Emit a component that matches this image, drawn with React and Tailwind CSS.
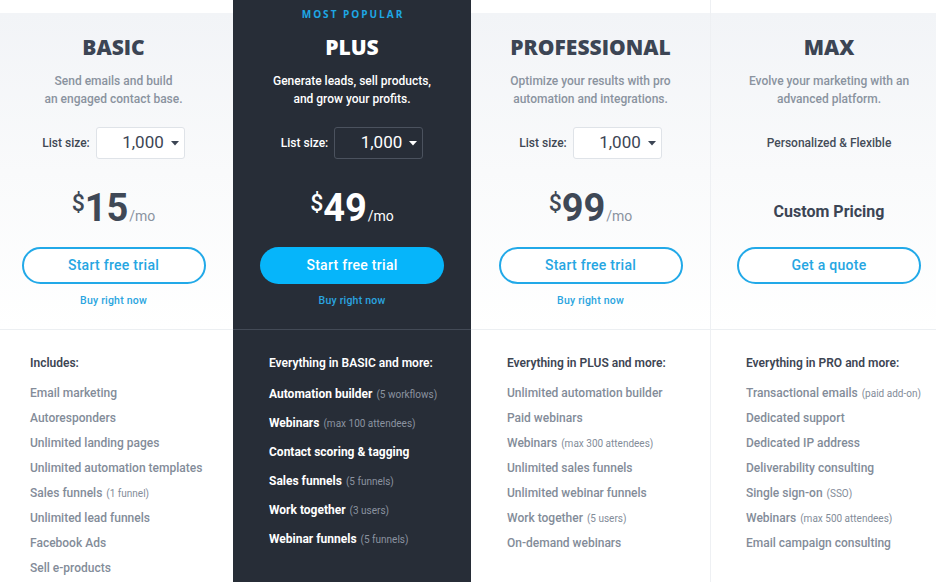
const plans = [
  {
    name: 'BASIC',
    desc: ['Send emails and build', 'an engaged contact base.'],
    price: '15',
    cta: 'Start free trial',
    header: 'Includes:',
    features: [
      ['Email marketing'],
      ['Autoresponders'],
      ['Unlimited landing pages'],
      ['Unlimited automation templates'],
      ['Sales funnels', '(1 funnel)'],
      ['Unlimited lead funnels'],
      ['Facebook Ads'],
      ['Sell e-products'],
    ],
  },
  {
    name: 'PLUS',
    popular: true,
    desc: ['Generate leads, sell products,', 'and grow your profits.'],
    price: '49',
    cta: 'Start free trial',
    header: 'Everything in BASIC and more:',
    features: [
      ['Automation builder', '(5 workflows)'],
      ['Webinars', '(max 100 attendees)'],
      ['Contact scoring & tagging'],
      ['Sales funnels', '(5 funnels)'],
      ['Work together', '(3 users)'],
      ['Webinar funnels', '(5 funnels)'],
    ],
  },
  {
    name: 'PROFESSIONAL',
    desc: ['Optimize your results with pro', 'automation and integrations.'],
    price: '99',
    cta: 'Start free trial',
    header: 'Everything in PLUS and more:',
    features: [
      ['Unlimited automation builder'],
      ['Paid webinars'],
      ['Webinars', '(max 300 attendees)'],
      ['Unlimited sales funnels'],
      ['Unlimited webinar funnels'],
      ['Work together', '(5 users)'],
      ['On-demand webinars'],
    ],
  },
  {
    name: 'MAX',
    desc: ['Evolve your marketing with an', 'advanced platform.'],
    custom: true,
    cta: 'Get a quote',
    header: 'Everything in PRO and more:',
    features: [
      ['Transactional emails', '(paid add-on)'],
      ['Dedicated support'],
      ['Dedicated IP address'],
      ['Deliverability consulting'],
      ['Single sign-on', '(SSO)'],
      ['Webinars', '(max 500 attendees)'],
      ['Email campaign consulting'],
    ],
  },
];

// column widths taken from the screenshot, the first one starts off-screen
const widths = { BASIC: 'w-[239px]', PLUS: 'w-[238px]', PROFESSIONAL: 'w-[239px]', MAX: 'w-[237px] border-l border-[#eef0f3]' };

function PlanColumn({ plan }) {
  const dark = plan.popular;
  return (
    <div className={`${widths[plan.name]} shrink-0 flex flex-col ${dark ? 'bg-[#272d37]' : 'bg-white'}`}>
      {/* top part */}
      <div className={`h-[329px] shrink-0 flex flex-col ${dark ? '' : 'pt-[13px]'}`}>
        <div className={`flex-1 flex flex-col items-center ${dark ? '' : 'bg-gradient-to-b from-[#f2f4f7] via-[#f9fafb] to-white'}`}>
          <div className={dark ? 'h-[33px] pt-[9px]' : 'h-[20px]'}>
            {dark && (
              <div className="text-[10px] leading-[10px] font-bold tracking-[0.2em] pl-[2px] text-[#1ea7e4] font-['Open_Sans',sans-serif]">
                MOST POPULAR
              </div>
            )}
          </div>
          <div className={`h-[28px] leading-[28px] text-[21px] font-extrabold font-['Open_Sans',sans-serif] ${dark ? 'text-white' : 'text-[#3c4554]'}`}>
            {plan.name}
          </div>
          <div className={`mt-[11px] text-center text-[12px] leading-[18px] font-medium ${dark ? 'text-white' : 'text-[#8a939f]'}`}>
            {plan.desc.map((l) => (
              <div key={l}>{l}</div>
            ))}
          </div>
          <div className="mt-[19px] h-[32px] flex items-center">
            {plan.custom ? (
              <div className="text-[12px] font-medium text-[#454d59]">Personalized &amp; Flexible</div>
            ) : (
              <div className="flex items-center gap-[6px]">
                <span className={`text-[12px] font-medium ${dark ? 'text-white' : 'text-[#3f4753]'}`}>List size:</span>
                <div
                  className={`w-[89px] h-[32px] rounded-[3px] border flex items-center justify-end pr-[5px] gap-[7px] ${
                    dark ? 'border-[#4b525e] bg-[#272d37] text-white' : 'border-[#dfe3e8] bg-white text-[#3c4554]'
                  }`}
                >
                  <span className="text-[17px]">1,000</span>
                  <svg width="8" height="5" viewBox="0 0 8 5" className="mt-[1px]">
                    <path d="M0 0h8L4 4.5z" fill="currentColor" />
                  </svg>
                </div>
              </div>
            )}
          </div>
          <div className="mt-[24px] h-[50px] flex items-start justify-center">
            {plan.custom ? (
              <div className="pt-[17px] text-[16px] font-bold text-[#3c4554]">Custom Pricing</div>
            ) : (
              <>
                <span className={`text-[23px] font-medium leading-[23px] mt-[9px] ${dark ? 'text-white' : 'text-[#3f4856]'}`}>$</span>
                <div className="flex items-baseline">
                  <span className={`text-[38px] leading-[50px] font-bold ${dark ? 'text-white' : 'text-[#3f4856]'}`}>{plan.price}</span>
                  <span className={`text-[14px] ml-[1px] ${dark ? 'text-white' : 'text-[#8a939f]'}`}>/mo</span>
                </div>
              </>
            )}
          </div>
          <div className="mt-[14px]">
            <button
              className={`w-[184px] h-[37px] rounded-full text-[14px] font-medium tracking-[0.02em] ${
                dark ? 'bg-[#06b5fa] text-white' : 'border-2 border-[#22a9e8] text-[#26a6e2] bg-white'
              }`}
            >
              {plan.cta}
            </button>
          </div>
          {!plan.custom && (
            <div className="mt-[10px] text-[10.5px] leading-[14px] font-medium tracking-[0.02em] text-[#2aa5e0]">Buy right now</div>
          )}
        </div>
      </div>
      <div className={`h-px shrink-0 ${dark ? 'bg-[#434a56]' : 'bg-[#eceff2]'}`} />
      {/* features */}
      <div className={`${plan.name === 'MAX' ? 'pl-[35px]' : 'pl-[36px]'} pt-[25px]`}>
        <div className={`text-[12px] leading-[16px] font-semibold ${dark ? 'text-white' : 'text-[#3d4553]'}`}>{plan.header}</div>
        <div className={dark ? 'mt-[9px]' : 'mt-[10px]'}>
          {plan.features.map(([main, note]) => (
            <div
              key={main}
              className={`whitespace-nowrap ${
                dark
                  ? 'h-[29px] leading-[29px] text-[12px] font-bold text-white'
                  : 'h-[25px] leading-[25px] text-[12px] font-medium text-[#838c99]'
              }`}
            >
              {main}
              {note && (
                <span className={`ml-[4px] text-[10px] font-normal ${dark ? 'text-[#8b93a0]' : 'text-[#838c99]'}`}>{note}</span>
              )}
            </div>
          ))}
        </div>
      </div>
    </div>
  );
}

export default function App() {
  return (
    <div className="w-[936px] h-[582px] overflow-hidden bg-white font-['Roboto',sans-serif]">
      <div className="flex -ml-[6px] h-full">
        {plans.map((p) => (
          <PlanColumn key={p.name} plan={p} />
        ))}
      </div>
    </div>
  );
}
